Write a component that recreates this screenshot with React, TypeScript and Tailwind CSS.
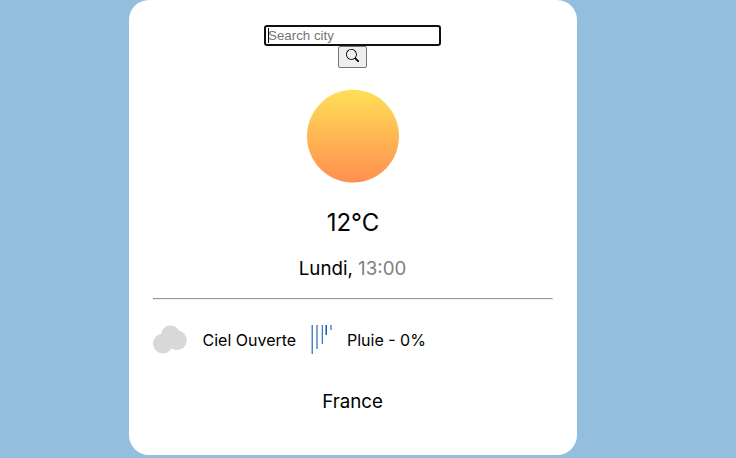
import { BsSearch } from "react-icons/bs";

function Sun() {
  return (
    <svg className="block" width="92" height="94" viewBox="0 0 92 94">
      <defs>
        <linearGradient id="sun" x1="0" y1="0" x2="0" y2="1">
          <stop offset="0" stopColor="#ffdf57" />
          <stop offset="1" stopColor="#ff8f50" />
        </linearGradient>
      </defs>
      <ellipse cx="46" cy="47.2" rx="46" ry="46.4" fill="url(#sun)" />
    </svg>
  );
}

function Cloud() {
  return (
    <svg width="34" height="29" viewBox="0 0 34 29" fill="#d8d8d8">
      <circle cx="10" cy="18.5" r="10" />
      <circle cx="17.5" cy="9.8" r="9.5" />
      <circle cx="23.8" cy="15.3" r="10" />
    </svg>
  );
}

function Rain() {
  return (
    <svg className="block" width="21" height="29" viewBox="0 0 21 29">
      <rect x="0" y="0" width="1" height="29" fill="#a9c6e8" />
      <rect x="1" y="0" width="1" height="29" fill="#4a83c6" />
      <rect x="5" y="0" width="2" height="24" fill="#7ba5d8" />
      <rect x="10" y="0" width="1" height="19" fill="#c3d7ef" />
      <rect x="11" y="0" width="1" height="19" fill="#3f7bc2" />
      <rect x="14" y="0" width="1" height="10" fill="#7ba5d8" />
      <rect x="15" y="0" width="1" height="10" fill="#1f61b5" />
      <rect x="19" y="0" width="2" height="5" fill="#7ba5d8" />
    </svg>
  );
}

export default function App() {
  return (
    <div className="flex h-[458px] justify-center bg-[#94bedd] pr-[30px] font-['Inter',sans-serif] text-black">
      <main className="flex h-[455px] w-[448px] flex-col items-center rounded-[20px] bg-white px-6 pt-[25px]">
        <div className="mr-px flex h-[21px] w-[177px] items-center rounded-[3px] border-2 border-[#101010] pl-[2px] font-['Liberation_Sans',Arial,sans-serif] text-[13.333px] leading-[15px] text-[#757575]">
          <span className="h-[15px] w-px shrink-0 bg-black" />
          <span className="-ml-px">Search city</span>
        </div>
        <button className="mr-px flex h-[22px] w-[29px] shrink-0 justify-center rounded-[2px] border border-[#767676] bg-[#efefef] pt-[2px]" aria-label="Search">
          <BsSearch size={13.333} color="#000" />
        </button>
        <div className="mt-[21px] mr-[2px] h-[94px] w-[92px] shrink-0 pl-[0.5px]">
          <Sun />
        </div>
        <p className="mt-[25px] text-2xl leading-[29px]">12°C</p>
        <p className="mt-[20px] mr-px text-[18.72px] leading-[23px]">
          Lundi, <span className="text-[#808080]">13:00</span>
        </p>
        <hr className="mt-[18px] h-[2px] w-full border border-t-[#9a9a9a] border-r-[#eeeeee] border-b-[#eeeeee] border-l-[#9a9a9a]" />
        <div className="mt-[25px] flex h-[29px] w-full items-center text-base leading-[19px]">
          <Cloud />
          <span className="ml-[15.5px] w-[93.5px] whitespace-nowrap pt-px">Ciel Ouverte</span>
          <span className="ml-[15px]"><Rain /></span>
          <span className="ml-[15px] pt-px">Pluie - 0%</span>
        </div>
        <p className="mt-[36px] mr-px text-[18.72px] leading-[23px]">France</p>
      </main>
    </div>
  );
}
